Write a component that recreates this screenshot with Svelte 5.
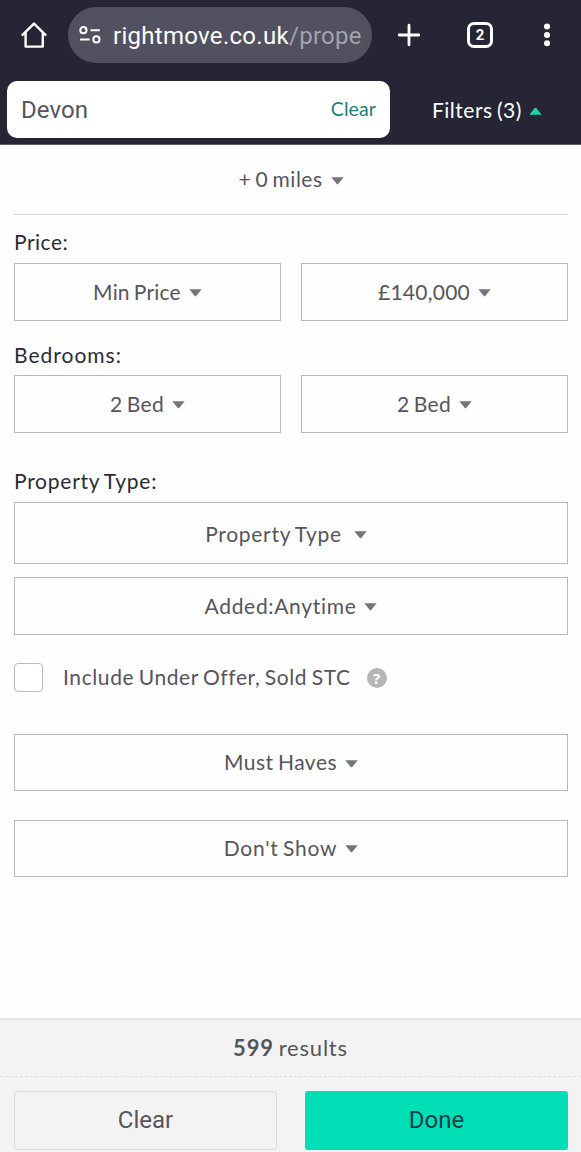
<script lang="ts">
	type Field = { label: string; spacing: number };

	const price: Field[] = [
		{ label: 'Min Price', spacing: 0.2 },
		{ label: '£140,000', spacing: 0.25 }
	];
	const bedrooms: Field[] = [
		{ label: '2 Bed', spacing: 0.35 },
		{ label: '2 Bed', spacing: 0.35 }
	];

	let includeSold = $state(false);
</script>

{#snippet caret(up = false)}
	<svg class="caret" class:up width="13" height="8" viewBox="0 0 13 8" aria-hidden="true">
		<path d="M0.3 0.3H12.7L7.4 6.8Q6.5 7.8 5.6 6.8Z" fill="currentColor" />
	</svg>
{/snippet}

{#snippet select(label: string, spacing: number, extra = '')}
	<button class="select {extra}">
		<span style="letter-spacing: {spacing}px">{label}</span>
		{@render caret()}
	</button>
{/snippet}

<div class="page">
	<header>
		<div class="browser-bar">
			<svg class="home" width="28" height="28" viewBox="0 0 28 28" fill="none" stroke="#fff" stroke-width="2.4" stroke-linejoin="round">
				<path d="M1.8 14.6L14 2.6L26.2 14.6M5.6 11.5V25.6H22.8V11.5" />
			</svg>
			<div class="address">
				<svg width="22" height="18" viewBox="0 0 22 18" fill="none" stroke="#fff" stroke-width="2">
					<circle cx="4.4" cy="4.2" r="3.1" />
					<circle cx="17.4" cy="13.4" r="3.1" />
					<path d="M11.5 4.2H20.8M1 13.4H10.6" />
				</svg>
				<span class="url">rightmove.co.uk<span class="path">/prope</span></span>
			</div>
			<svg class="plus" width="24" height="24" viewBox="0 0 24 24" stroke="#fff" stroke-width="2.8" stroke-linecap="round">
				<path d="M12 2.2V21.8M2.2 12H21.8" />
			</svg>
			<div class="tabs">2</div>
			<svg class="menu" width="8" height="24" viewBox="0 0 8 24" fill="#fff">
				<circle cx="4" cy="3.5" r="3" />
				<circle cx="4" cy="12" r="3" />
				<circle cx="4" cy="20.3" r="3" />
			</svg>
		</div>
		<div class="search-row">
			<div class="search">
				<span class="location">Devon</span>
				<span class="clear-link">Clear</span>
			</div>
			<div class="filters">
				<span>Filters (3)</span>
				{@render caret(true)}
			</div>
		</div>
	</header>

	<main>
		<div class="radius">
			{@render select('+ 0 miles', 0.5, 'plain')}
		</div>

		<h2 class="price-title">Price:</h2>
		<div class="pair">
			{#each price as field}
				{@render select(field.label, field.spacing)}
			{/each}
		</div>

		<h2 class="bed-title">Bedrooms:</h2>
		<div class="pair">
			{#each bedrooms as field}
				{@render select(field.label, field.spacing)}
			{/each}
		</div>

		<h2 class="type-title">Property Type:</h2>
		{@render select('Property Type', 0.72, 'type')}
		{@render select('Added:Anytime', 0.68, 'added')}

		<label class="include">
			<input type="checkbox" bind:checked={includeSold} />
			<span>Include Under Offer, Sold STC</span>
			<i class="help">?</i>
		</label>

		{@render select('Must Haves', 0.5, 'must-have')}
		{@render select("Don't Show", 0.75, 'dont-show')}
	</main>

	<footer>
		<div class="results"><b>599</b> results</div>
		<div class="actions">
			<button class="clear">Clear</button>
			<button class="done">Done</button>
		</div>
	</footer>
</div>

<style>
	:global(body) {
		background: #fefefe;
	}

	.page {
		box-sizing: border-box;
		height: 1152px;
		display: flex;
		flex-direction: column;
		overflow: hidden;
		font-family: Lato, 'Noto Sans', sans-serif;
		font-size: 21px;
		word-spacing: -1.5px;
		color: #55555c;
	}

	button {
		box-sizing: border-box;
		padding: 0;
		background: none;
		font: inherit;
		word-spacing: inherit;
		color: inherit;
	}

	svg {
		display: block;
		flex: none;
	}

	header {
		box-sizing: border-box;
		flex: none;
		height: 145px;
		background: #262536;
		border-bottom: 1px solid #5f5e6a;
	}

	.browser-bar {
		display: flex;
		align-items: center;
		height: 70px;
		padding-left: 20px;
	}

	.address {
		box-sizing: border-box;
		display: flex;
		align-items: center;
		gap: 12px;
		width: 304px;
		height: 56px;
		margin-left: 20px;
		padding-left: 11px;
		border-radius: 28px;
		background: #52515f;
	}

	.url {
		padding-top: 2px;
		font-family: Roboto, sans-serif;
		font-size: 24px;
		letter-spacing: 0.29px;
		color: #fff;
	}

	.path {
		color: #a3a2ad;
	}

	.plus {
		margin-left: 25px;
	}

	.tabs {
		box-sizing: border-box;
		display: flex;
		align-items: center;
		justify-content: center;
		width: 26px;
		height: 26px;
		margin-left: 46px;
		border: 3px solid #fff;
		border-radius: 7px;
		font: bold 15px Roboto, sans-serif;
		color: #fff;
	}

	.menu {
		margin-left: 50px;
	}

	.search-row {
		display: flex;
		align-items: center;
		padding: 11px 0 0 7px;
	}

	.search {
		box-sizing: border-box;
		display: flex;
		align-items: center;
		justify-content: space-between;
		width: 383px;
		height: 57px;
		padding: 0 14px 0 14px;
		border-radius: 10px;
		background: #fff;
	}

	.location {
		font-family: Roboto, sans-serif;
		font-size: 24px;
		letter-spacing: 0.1px;
	}

	.clear-link {
		padding-bottom: 3px;
		font-size: 19.5px;
		letter-spacing: 0.1px;
		color: #1a8078;
	}

	.filters {
		display: flex;
		align-items: center;
		gap: 7px;
		margin-left: 42px;
		letter-spacing: 0.5px;
		color: #fff;
	}

	.caret {
		margin-top: 4px;
		color: #74747c;
	}

	.caret.up {
		margin-top: 2px;
		color: #1fd5ad;
		transform: rotate(180deg);
	}

	main {
		flex: 1;
		padding: 0 13px 0 14px;
	}

	.radius {
		box-sizing: border-box;
		height: 70px;
		border-bottom: 1px solid #d8d8da;
	}

	h2 {
		margin: 0;
		font-size: 21px;
		font-weight: 400;
		line-height: 28px;
		letter-spacing: 0.75px;
		color: #2b2b36;
	}

	.price-title {
		padding: 13px 0 7px;
		letter-spacing: 0.5px;
	}

	.bed-title {
		padding: 20px 0 6px;
		letter-spacing: 1px;
	}

	.type-title {
		padding: 34px 0 7px;
	}

	.pair {
		display: grid;
		grid-template-columns: 1fr 1fr;
		gap: 20px;
	}

	.select {
		display: flex;
		align-items: center;
		justify-content: center;
		gap: 8px;
		width: 100%;
		height: 58px;
		padding-bottom: 2px;
		border: 1px solid #b9b9bb;
	}

	.plain {
		height: 69px;
		padding-bottom: 2px;
		border: 0;
	}

	.type {
		height: 62px;
		padding: 0 10px 0 0;
		gap: 12px;
	}

	.type .caret {
		margin-top: 3px;
	}

	.added {
		margin-top: 13px;
	}

	.include {
		display: flex;
		align-items: center;
		height: 99px;
		padding-bottom: 14px;
		box-sizing: border-box;
	}

	.include input {
		appearance: none;
		box-sizing: border-box;
		width: 29px;
		height: 29px;
		margin: 0 20px 0 0;
		border: 1px solid #bbbbbd;
		border-radius: 4px;
		background: #fff;
	}

	.include span {
		padding-bottom: 2px;
		letter-spacing: 0.6px;
	}

	.help {
		width: 20px;
		height: 20px;
		margin: 1px 0 0 16px;
		border-radius: 50%;
		background: #b5b5b5;
		font: bold 15px/20px 'Noto Sans', sans-serif;
		text-align: center;
		color: #fff;
	}

	.must-have,
	.dont-show {
		height: 57px;
	}

	.dont-show {
		margin-top: 29px;
		padding-bottom: 3px;
	}

	footer {
		box-sizing: border-box;
		flex: none;
		height: 134px;
		border-top: 2px solid #e6e6e7;
		background: #f3f3f4;
	}

	.results {
		height: 56px;
		border-bottom: 1px dashed #dfdfe1;
		line-height: 56px;
		text-align: center;
		font-size: 22px;
		letter-spacing: 0.8px;
	}

	.actions {
		display: grid;
		grid-template-columns: 263px 263px;
		gap: 28px;
		padding: 14px 0 0 14px;
	}

	.actions button {
		height: 59px;
		padding-bottom: 1px;
		border-radius: 3px;
		font-family: Roboto, sans-serif;
		font-size: 24px;
	}

	.clear {
		border: 1px solid #dcdcde;
	}

	.done {
		border: 0;
		background: #00deb6;
		color: #124049;
	}
</style>
